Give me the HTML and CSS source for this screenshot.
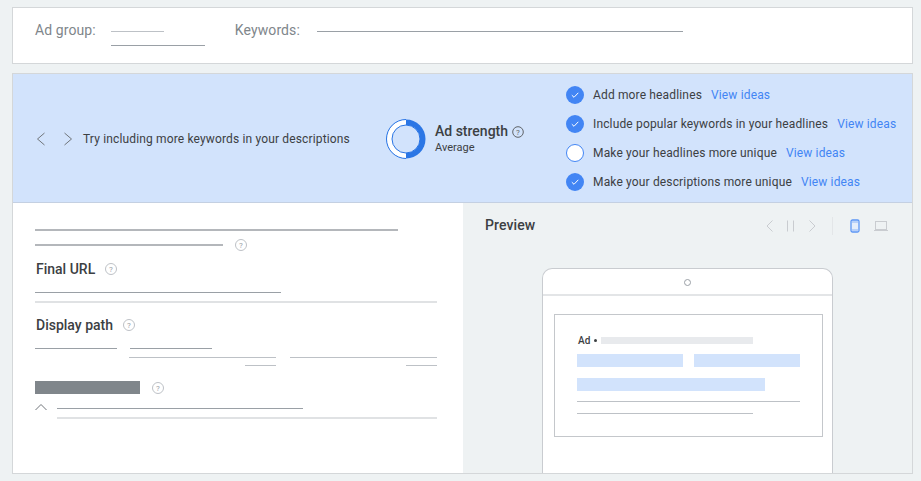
FILE: index.html
```html
<!DOCTYPE html>
<html lang="en">
<head>
<meta charset="utf-8">
<title>Ad strength</title>
<link rel="stylesheet" href="styles.css">
</head>
<body>
<section class="card top">
  <span class="top-label">Ad group:</span>
  <div class="group-lines"><div class="ln l53 c-light"></div><div class="ln l94 c-mid"></div></div>
  <span class="top-label kw">Keywords:</span>
  <div class="ln l366 c-mid kw-line"></div>
</section>
<main class="card main">
  <section class="banner">
    <div class="tip">
      <svg class="chev" width="10" height="14" viewBox="0 0 10 14"><path d="M8.500 1 1.500 7 8.500 13" fill="none" stroke="#70757a" stroke-width="1"/></svg>
      <svg class="chev chev-r" width="10" height="14" viewBox="0 0 10 14"><path d="M1.500 1 8.500 7 1.500 13" fill="none" stroke="#70757a" stroke-width="1"/></svg>
      <span class="tip-text">Try including more keywords in your descriptions</span>
    </div>
    <div class="strength">
      <svg width="40" height="40" viewBox="0 0 40 40" class="ring">
        <circle cx="20" cy="20" r="19.500" fill="#2b76e5"/>
        <path d="M20 .5A19.500 19.500 0 0 0 20 39.500Z" fill="#fff"/>
        <path d="M20 .5A19.500 19.500 0 0 0 20 39.500" fill="none" stroke="#2b76e5" stroke-width="1"/>
        <circle cx="20" cy="20" r="14" fill="#d2e3fc" stroke="#2b76e5" stroke-width="1"/>
      </svg>
      <div class="strength-text">
        <div class="strength-title">Ad strength
          <svg class="help help-title" width="12" height="12" viewBox="0 0 12 12"><circle cx="6" cy="6" r="5.300" fill="none" stroke="#5f6368"/><text x="6" y="8.700" text-anchor="middle" class="q dark">?</text></svg>
        </div>
        <div class="strength-sub">Average</div>
      </div>
    </div>
    <ul class="checks">
      <li><svg class="tick" width="18" height="18" viewBox="0 0 18 18"><circle cx="9" cy="9" r="9" fill="#4285f4"/><path d="M5.800 9.200 8 11.300 12.300 6.800" fill="none" stroke="#fff" stroke-width="1"/></svg><span>Add more headlines</span><a>View ideas</a></li>
      <li><svg class="tick" width="18" height="18" viewBox="0 0 18 18"><circle cx="9" cy="9" r="9" fill="#4285f4"/><path d="M5.800 9.200 8 11.300 12.300 6.800" fill="none" stroke="#fff" stroke-width="1"/></svg><span>Include popular keywords in your headlines</span><a>View ideas</a></li>
      <li><svg class="tick" width="18" height="18" viewBox="0 0 18 18"><circle cx="9" cy="9" r="8.500" fill="#fff" stroke="#4285f4"/></svg><span>Make your headlines more unique</span><a>View ideas</a></li>
      <li><svg class="tick" width="18" height="18" viewBox="0 0 18 18"><circle cx="9" cy="9" r="9" fill="#4285f4"/><path d="M5.800 9.200 8 11.300 12.300 6.800" fill="none" stroke="#fff" stroke-width="1"/></svg><span>Make your descriptions more unique</span><a>View ideas</a></li>
    </ul>
  </section>
  <div class="split">
    <section class="form">
      <div class="ln l363 c-soft thick r1"></div>
      <div class="row r2">
        <div class="ln l188 c-soft thick"></div>
        <svg class="help h-light" width="12" height="12" viewBox="0 0 12 12"><circle cx="6" cy="6" r="5.500" fill="none" stroke="#bdc1c6"/><text x="6" y="8.500" text-anchor="middle" class="q">?</text></svg>
      </div>
      <div class="field-title t-url">Final URL
        <svg class="help h-title" width="12" height="12" viewBox="0 0 12 12"><circle cx="6" cy="6" r="5.500" fill="none" stroke="#bdc1c6"/><text x="6" y="8.500" text-anchor="middle" class="q">?</text></svg>
      </div>
      <div class="ln l246 c-mid r3"></div>
      <div class="ln l402 c-pale r4"></div>
      <div class="field-title t-path">Display path
        <svg class="help h-title" width="12" height="12" viewBox="0 0 12 12"><circle cx="6" cy="6" r="5.500" fill="none" stroke="#bdc1c6"/><text x="6" y="8.500" text-anchor="middle" class="q">?</text></svg>
      </div>
      <div class="paths">
        <div class="path-short"><div class="ln l82 c-mid"></div></div>
        <div class="path-col">
          <div class="ln l82 c-mid pad1"></div>
          <div class="ln l147 c-light r5"></div>
          <div class="ln l31 c-light end r6"></div>
        </div>
        <div class="path-col second">
          <div class="ln l147 c-light"></div>
          <div class="ln l31 c-light end r6"></div>
        </div>
      </div>
      <div class="row r7">
        <div class="block"></div>
        <svg class="help h-block" width="12" height="12" viewBox="0 0 12 12"><circle cx="6" cy="6" r="5.500" fill="none" stroke="#bdc1c6"/><text x="6" y="8.500" text-anchor="middle" class="q">?</text></svg>
      </div>
      <div class="expander">
        <svg width="12" height="8" viewBox="0 0 12 8"><path d="M.5 7 6 1.500 11.500 7" fill="none" stroke="#70757a"/></svg>
        <div class="exp-lines">
          <div class="ln l246 c-mid"></div>
          <div class="ln l380 c-pale thick r8"></div>
        </div>
      </div>
    </section>
    <section class="preview">
      <header class="preview-head">
        <h2>Preview</h2>
        <div class="controls">
          <svg width="10" height="14" viewBox="0 0 10 14"><path d="M7.500 1.500 2 7 7.500 12.500" fill="none" stroke="#c9ccd0"/></svg>
          <svg class="ctl-pause" width="10" height="14" viewBox="0 0 10 14"><path d="M1.500 1.500V12.500M7.500 1.500V12.500" fill="none" stroke="#c9ccd0"/></svg>
          <svg class="ctl-next" width="10" height="14" viewBox="0 0 10 14"><path d="M2.500 1.500 8 7 2.500 12.500" fill="none" stroke="#c9ccd0"/></svg>
          <div class="ctl-sep"></div>
          <svg class="ctl-phone" width="10" height="14" viewBox="0 0 10 14"><rect x="1" y="1" width="8" height="12" rx="1.500" fill="#e4edfb" stroke="#5b95f5" stroke-width="1.300"/><path d="M1 3H9M1 11H9" stroke="#8ab4f8"/></svg>
          <svg class="ctl-laptop" width="16" height="12" viewBox="0 0 16 12"><rect x="2.500" y="1.500" width="11" height="8" fill="none" stroke="#c9ccd0"/><path d="M1 10.500H15" stroke="#c9ccd0"/></svg>
        </div>
      </header>
      <div class="phone">
        <div class="phone-top"><span class="camera"></span></div>
        <div class="ad">
          <div class="ad-line"><span class="ad-tag">Ad</span><span class="ad-dot"></span><span class="ad-url"></span></div>
          <div class="ad-heads"><span class="hl w106"></span><span class="hl w106"></span></div>
          <span class="hl w188 hl2"></span>
          <div class="ln l223 c-light d1"></div>
          <div class="ln l176 c-light d2"></div>
        </div>
      </div>
    </section>
  </div>
</main>
</body>
</html>
```
FILE: styles.css
```css
* { box-sizing: border-box; }
html, body { height: 100%; }
body {
  margin: 0;
  padding: 7px 8px 0 12px;
  background: #eef2f3;
  font-family: Roboto, "Liberation Sans", sans-serif;
  color: #3c4043;
  overflow: hidden;
}
.card { background: #fff; border: 1px solid #d4d7d9; }
.ln { height: 1px; }
.thick { height: 2px; }
.c-light { background: #bdc1c6; }
.c-mid { background: #9aa0a6; }
.c-soft { background: #b4b7bb; }
.c-pale { background: #e0e2e4; }
.l31 { width: 31px; } .l53 { width: 53px; } .l82 { width: 82px; } .l94 { width: 94px; }
.l147 { width: 147px; } .l176 { width: 176px; } .l188 { width: 188px; } .l223 { width: 223px; }
.l246 { width: 246px; } .l363 { width: 363px; } .l366 { width: 366px; } .l380 { width: 380px; } .l402 { width: 402px; }

.top { height: 57px; display: flex; align-items: flex-start; padding: 0 0 0 22px; }
.top-label { font-size: 14px; line-height: 18px; color: #80868b; margin-top: 13px; letter-spacing: .1px; }
.group-lines { margin: 23px 0 0 15px; }
.group-lines .ln + .ln { margin-top: 13px; }
.kw { margin-left: 30px; }
.kw-line { margin: 23px 0 0 17px; }

.main { margin-top: 9px; height: 401px; overflow: hidden; }
.banner {
  height: 129px;
  background: #d2e3fc;
  border-bottom: 1px solid #c4d0e2;
  display: flex;
  align-items: center;
  padding-left: 23px;
}
.tip { display: flex; align-items: center; width: 350px; margin-top: 2px; }
.chev-r { margin-left: 17px; }
.tip-text { font-size: 12px; line-height: 18px; margin-left: 10px; letter-spacing: .15px; white-space: nowrap; }
.strength { display: flex; align-items: center; width: 180px; }
.ring { display: block; flex: none; margin-top: 2px; }
.strength-text { margin: 1px 0 0 9px; }
.strength-title { font-size: 14px; line-height: 16px; font-weight: 500; white-space: nowrap; display: flex; align-items: center; gap: 4px; }
.strength-sub { font-size: 11px; line-height: 14px; margin-top: 2px; }
.q { font: 8px Roboto, sans-serif; fill: #9aa0a6; }
.q.dark { fill: #5f6368; }
.help { display: block; flex: none; }
.help-title { margin-top: 2px; }

.checks { list-style: none; margin: 0; padding: 0; display: flex; flex-direction: column; gap: 11px; }
.checks li { display: flex; align-items: center; height: 18px; font-size: 12px; letter-spacing: .15px; white-space: nowrap; }
.tick { flex: none; margin-right: 9px; }
.checks a { color: #4285f4; margin-left: 9px; }

.split { display: flex; height: 271px; }
.form { width: 450px; padding: 26px 0 0 22px; background: #fff; }
.r2 { display: flex; align-items: flex-start; margin-top: 13px; }
.r2 .help { margin: -5px 0 0 12px; }
.field-title { font-size: 14px; font-weight: 500; line-height: 18px; padding-left: 1px; display: flex; align-items: center; }
.t-url { margin-top: 9px; }
.t-path { margin-top: 13px; }
.h-title { margin-left: 10px; }
.r3 { margin-top: 14px; }
.r4 { margin-top: 8px; height: 2px; }
.paths { display: flex; margin-top: 14px; height: 18px; }
.path-short { width: 94px; }
.path-col { width: 147px; display: flex; flex-direction: column; }
.pad1 { margin-left: 1px; }
.second { margin-left: 14px; padding-top: 9px; }
.r5 { margin-top: 8px; }
.r6 { margin-top: 7px; }
.end { align-self: flex-end; }
.r7 { display: flex; align-items: center; margin-top: 15px; }
.block { width: 105px; height: 13px; background: #80868b; }
.h-block { margin-left: 12px; }
.expander { display: flex; align-items: flex-start; margin-top: 9px; }
.expander svg { display: block; flex: none; }
.exp-lines { margin: 5px 0 0 10px; }
.r8 { margin-top: 8px; }

.preview { flex: 1; background: #eef2f3; padding: 0 0 0 22px; min-width: 0; }
.preview-head { display: flex; align-items: center; height: 44px; }
h2 { margin: 0; font-size: 14px; font-weight: 500; line-height: 18px; letter-spacing: .1px; }
.controls { margin-left: auto; display: flex; align-items: center; padding-right: 23px; margin-top: 1px; }
.controls svg { display: block; }
.ctl-pause { margin-left: 11px; }
.ctl-next { margin-left: 11px; }
.ctl-sep { width: 1px; height: 18px; background: #e3e6e8; margin-left: 15px; }
.ctl-phone { margin-left: 17px; }
.ctl-laptop { margin-left: 13px; }

.phone {
  width: 291px;
  height: 230px;
  margin: 21px 0 0 57px;
  background: #fff;
  border: 1px solid #c9ccd0;
  border-bottom: 0;
  border-radius: 10px 10px 0 0;
}
.phone-top { height: 27px; border-bottom: 2px solid #e3e5e7; display: flex; align-items: center; justify-content: center; }
.camera { width: 7px; height: 7px; border: 1px solid #9aa0a6; border-radius: 50%; margin-top: 1px; }
.ad { width: 269px; height: 123px; margin: 18px 0 0 11px; border: 1px solid #c4c7cb; padding: 21px 22px 0 22px; }
.ad-line { display: flex; align-items: center; height: 9px; }
.ad-tag { font-size: 10px; font-weight: 500; line-height: 10px; margin-left: 1px; }
.ad-dot { width: 3px; height: 3px; border-radius: 50%; background: #3c4043; margin-left: 4px; }
.ad-url { width: 152px; height: 7px; background: #e8eaed; margin-left: 4px; }
.ad-heads { display: flex; gap: 11px; margin-top: 9px; }
.hl { display: block; height: 13px; background: #d2e3fc; }
.w106 { width: 106px; }
.w188 { width: 188px; }
.hl2 { margin-top: 11px; }
.d1 { margin-top: 10px; }
.d2 { margin-top: 11px; }
```
